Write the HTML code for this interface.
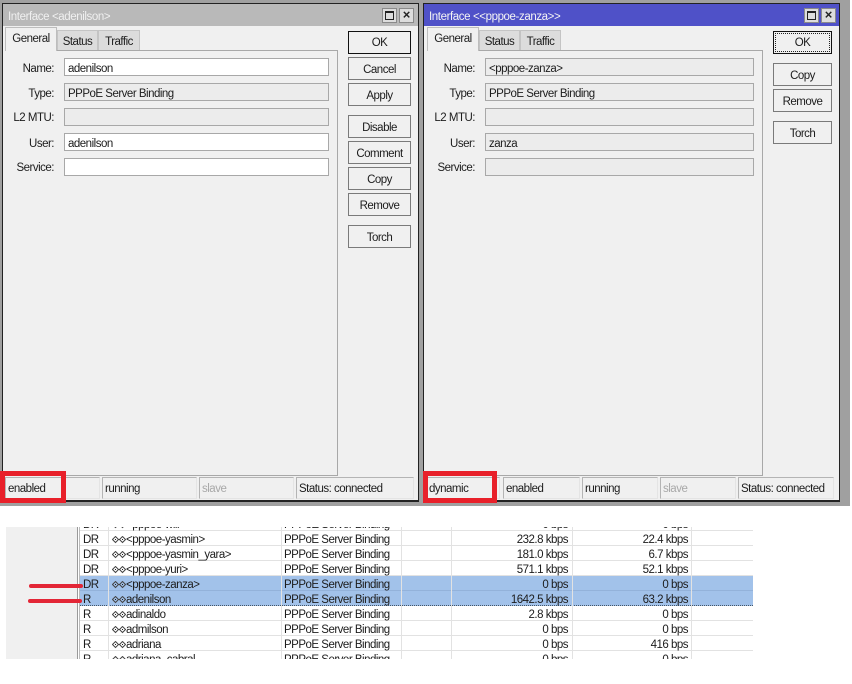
<!DOCTYPE html>
<html><head><meta charset="utf-8"><style>
html,body{margin:0;padding:0;background:#fff;width:852px;height:684px;overflow:hidden}
body{position:relative;font:11.5px/14px "Liberation Sans",sans-serif;letter-spacing:-.5px;color:#1c1c1c}
div{position:absolute;box-sizing:border-box;white-space:nowrap}
.win{background:#f0f0f0;border:1px solid #222;border-bottom-width:2px}
.tb{left:0;right:0;top:0;height:22px;padding:6px 0 0 5px;letter-spacing:-.4px}
.ctl{width:15px;height:15px;top:3px;background:#ddd;border:1px solid #8a8a8a}
.tab{height:20px;top:28px;background:#dcdcdc;border:1px solid #c4c4c4;border-bottom:0;padding-top:4px;text-align:center}
.tab.on{height:24px;top:27px;background:#f0f0f0;padding-top:4px;border-color:#bdbdbd}
.pan{border:1px solid #a8a8a8;border-left:0;top:50px;height:426px}
.lb{width:60px;text-align:right;left:0}
.f{height:18px;border:1px solid #a8a8a8;background:#ececec;padding:3px 0 0 3px}
.f.w{background:#fff}
.b{height:23px;background:#f0f0f0;border:1px solid #7a7a7a;text-align:center;padding-top:5px}
.s{top:477px;height:22px;border:1px solid #b4b4b4;border-right-color:#e4e4e4;border-bottom-color:#e4e4e4;padding:4px 0 0 2px}
.red{border:5px solid #e8202a}
.t{height:15px;left:0;width:747px;border-bottom:1px solid #e2e2e2;padding:0}
.t div{top:2px}
.sel{background:#a2c2ea;border-bottom-color:#93b2da}
.v{width:1px;background:#e2e2e2;top:0;bottom:0}
.c1{left:77px}.c2{left:120px}.c3{left:278px}
.n1,.n2{text-align:right;width:100px}
.n1{left:462px}.n2{left:582px}
.ic{left:106px;top:5px;width:14px;height:8px}
</style></head><body>
<svg width="0" height="0" style="position:absolute"><defs><g id="d" fill="none" stroke="#444" stroke-width="1"><path d="M3.5 .5 L6.5 3.5 L3.5 6.5 L.5 3.5Z"/><path d="M10.5 .5 L13.5 3.5 L10.5 6.5 L7.5 3.5Z"/><path d="M6 3.5H8"/><path d="M3 3.5h1M10 3.5h1" stroke="#222"/></g></defs></svg>

<div style="left:0;top:0;width:850px;height:506px;background:#a0a0a0"></div>

<!-- window 1 -->
<div class="win" style="left:2px;top:3px;width:417px;height:499px">
<div class="tb" style="background:#b9b9b9;color:#f0f0f0">Interface &lt;adenilson&gt;</div>
</div>
<div class="ctl" style="left:382px;top:8px"><div style="left:2px;top:2px;width:9px;height:9px;border:1px solid #222;border-top-width:2px"></div></div>
<div class="ctl" style="left:399px;top:8px;font-weight:bold;line-height:12px;text-align:center;font-size:13px;color:#222;letter-spacing:0">×</div>
<div class="tab" style="left:57px;top:30px;width:41px">Status</div>
<div class="tab" style="left:98px;top:30px;width:42px">Traffic</div>
<div class="pan" style="left:5px;width:333px"></div>
<div class="tab on" style="left:5px;width:52px">General</div>
<div class="lb" style="left:-6px;top:62px">Name:</div><div class="f w" style="left:64px;top:58px;width:265px">adenilson</div>
<div class="lb" style="left:-6px;top:87px">Type:</div><div class="f" style="left:64px;top:83px;width:265px">PPPoE Server Binding</div>
<div class="lb" style="left:-6px;top:111px">L2 MTU:</div><div class="f" style="left:64px;top:108px;width:265px"></div>
<div class="lb" style="left:-6px;top:137px">User:</div><div class="f w" style="left:64px;top:133px;width:265px">adenilson</div>
<div class="lb" style="left:-6px;top:161px">Service:</div><div class="f w" style="left:64px;top:158px;width:265px"></div>
<div class="b" style="left:348px;top:31px;width:63px;border-color:#111;padding-top:4px">OK</div>
<div class="b" style="left:348px;top:57px;width:63px">Cancel</div>
<div class="b" style="left:348px;top:83px;width:63px">Apply</div>
<div class="b" style="left:348px;top:115px;width:63px">Disable</div>
<div class="b" style="left:348px;top:141px;width:63px">Comment</div>
<div class="b" style="left:348px;top:167px;width:63px">Copy</div>
<div class="b" style="left:348px;top:193px;width:63px">Remove</div>
<div class="b" style="left:348px;top:225px;width:63px">Torch</div>
<div class="s" style="left:5px;width:95px">enabled</div>
<div class="s" style="left:102px;width:95px">running</div>
<div class="s" style="left:199px;width:95px;color:#a8a8a8">slave</div>
<div class="s" style="left:296px;width:118px">Status: connected</div>
<div class="red" style="left:0;top:471px;width:66px;height:32px"></div>

<!-- window 2 -->
<div class="win" style="left:423px;top:3px;width:417px;height:499px">
<div class="tb" style="background:#4f51c8;color:#f4f4f4">Interface &lt;&lt;pppoe-zanza&gt;&gt;</div>
</div>
<div class="ctl" style="left:804px;top:8px"><div style="left:2px;top:2px;width:9px;height:9px;border:1px solid #222;border-top-width:2px"></div></div>
<div class="ctl" style="left:821px;top:8px;font-weight:bold;line-height:12px;text-align:center;font-size:13px;color:#222;letter-spacing:0">×</div>
<div class="tab" style="left:479px;top:30px;width:41px">Status</div>
<div class="tab" style="left:520px;top:30px;width:41px">Traffic</div>
<div class="pan" style="left:427px;width:336px"></div>
<div class="tab on" style="left:427px;width:52px">General</div>
<div class="lb" style="left:415px;top:62px">Name:</div><div class="f" style="left:485px;top:58px;width:269px">&lt;pppoe-zanza&gt;</div>
<div class="lb" style="left:415px;top:87px">Type:</div><div class="f" style="left:485px;top:83px;width:269px">PPPoE Server Binding</div>
<div class="lb" style="left:415px;top:111px">L2 MTU:</div><div class="f" style="left:485px;top:108px;width:269px"></div>
<div class="lb" style="left:415px;top:137px">User:</div><div class="f" style="left:485px;top:133px;width:269px">zanza</div>
<div class="lb" style="left:415px;top:161px">Service:</div><div class="f" style="left:485px;top:158px;width:269px"></div>
<div class="b" style="left:773px;top:31px;width:59px;border-color:#111;padding-top:4px"><div style="left:1px;top:1px;right:1px;bottom:1px;border:1px dotted #222"></div>OK</div>
<div class="b" style="left:773px;top:63px;width:59px">Copy</div>
<div class="b" style="left:773px;top:89px;width:59px">Remove</div>
<div class="b" style="left:773px;top:121px;width:59px">Torch</div>
<div class="s" style="left:426px;width:74px">dynamic</div>
<div class="s" style="left:503px;width:77px">enabled</div>
<div class="s" style="left:582px;width:76px">running</div>
<div class="s" style="left:660px;width:76px;color:#a8a8a8">slave</div>
<div class="s" style="left:738px;width:96px">Status: connected</div>
<div class="red" style="left:423px;top:471px;width:74px;height:32px"></div>

<!-- table -->
<div style="left:6px;top:527px;width:747px;height:132px;overflow:hidden;background:#fff">

<div class="t" style="top:-11px"><div class="c1">DR</div><svg class="ic" style="position:absolute"><use href="#d"/></svg><div class="c2">&lt;pppoe-will&gt;</div><div class="c3">PPPoE Server Binding</div><div class="n1">0 bps</div><div class="n2">0 bps</div></div>
<div class="t" style="top:4px"><div class="c1">DR</div><svg class="ic" style="position:absolute"><use href="#d"/></svg><div class="c2">&lt;pppoe-yasmin&gt;</div><div class="c3">PPPoE Server Binding</div><div class="n1">232.8 kbps</div><div class="n2">22.4 kbps</div></div>
<div class="t" style="top:19px"><div class="c1">DR</div><svg class="ic" style="position:absolute"><use href="#d"/></svg><div class="c2">&lt;pppoe-yasmin_yara&gt;</div><div class="c3">PPPoE Server Binding</div><div class="n1">181.0 kbps</div><div class="n2">6.7 kbps</div></div>
<div class="t" style="top:34px"><div class="c1">DR</div><svg class="ic" style="position:absolute"><use href="#d"/></svg><div class="c2">&lt;pppoe-yuri&gt;</div><div class="c3">PPPoE Server Binding</div><div class="n1">571.1 kbps</div><div class="n2">52.1 kbps</div></div>
<div class="t sel" style="top:49px"><div class="c1">DR</div><svg class="ic" style="position:absolute"><use href="#d"/></svg><div class="c2">&lt;pppoe-zanza&gt;</div><div class="c3">PPPoE Server Binding</div><div class="n1">0 bps</div><div class="n2">0 bps</div></div>
<div class="t sel" style="top:64px;border-bottom:1px dotted #456"><div class="c1">R</div><svg class="ic" style="position:absolute"><use href="#d"/></svg><div class="c2">adenilson</div><div class="c3">PPPoE Server Binding</div><div class="n1">1642.5 kbps</div><div class="n2">63.2 kbps</div></div>
<div class="t" style="top:79px"><div class="c1">R</div><svg class="ic" style="position:absolute"><use href="#d"/></svg><div class="c2">adinaldo</div><div class="c3">PPPoE Server Binding</div><div class="n1">2.8 kbps</div><div class="n2">0 bps</div></div>
<div class="t" style="top:94px"><div class="c1">R</div><svg class="ic" style="position:absolute"><use href="#d"/></svg><div class="c2">admilson</div><div class="c3">PPPoE Server Binding</div><div class="n1">0 bps</div><div class="n2">0 bps</div></div>
<div class="t" style="top:109px"><div class="c1">R</div><svg class="ic" style="position:absolute"><use href="#d"/></svg><div class="c2">adriana</div><div class="c3">PPPoE Server Binding</div><div class="n1">0 bps</div><div class="n2">416 bps</div></div>
<div class="t" style="top:124px"><div class="c1">R</div><svg class="ic" style="position:absolute"><use href="#d"/></svg><div class="c2">adriana_cabral</div><div class="c3">PPPoE Server Binding</div><div class="n1">0 bps</div><div class="n2">0 bps</div></div>

<div style="left:0;top:0;width:71px;height:132px;background:#f0f0f0"></div>
<div style="left:71px;top:0;width:3px;height:132px;background:#fff;border-left:1px solid #999;border-right:1px solid #bbb"></div>
<div class="v" style="left:102px"></div>
<div class="v" style="left:275px"></div>
<div class="v" style="left:395px"></div>
<div class="v" style="left:445px"></div>
<div class="v" style="left:566px"></div>
<div class="v" style="left:685px"></div>
</div>
<div style="left:29px;top:584px;width:54px;height:4px;background:#e32636;border-radius:2px"></div>
<div style="left:28px;top:599px;width:54px;height:4px;background:#e32636;border-radius:2px"></div>
</body></html>
